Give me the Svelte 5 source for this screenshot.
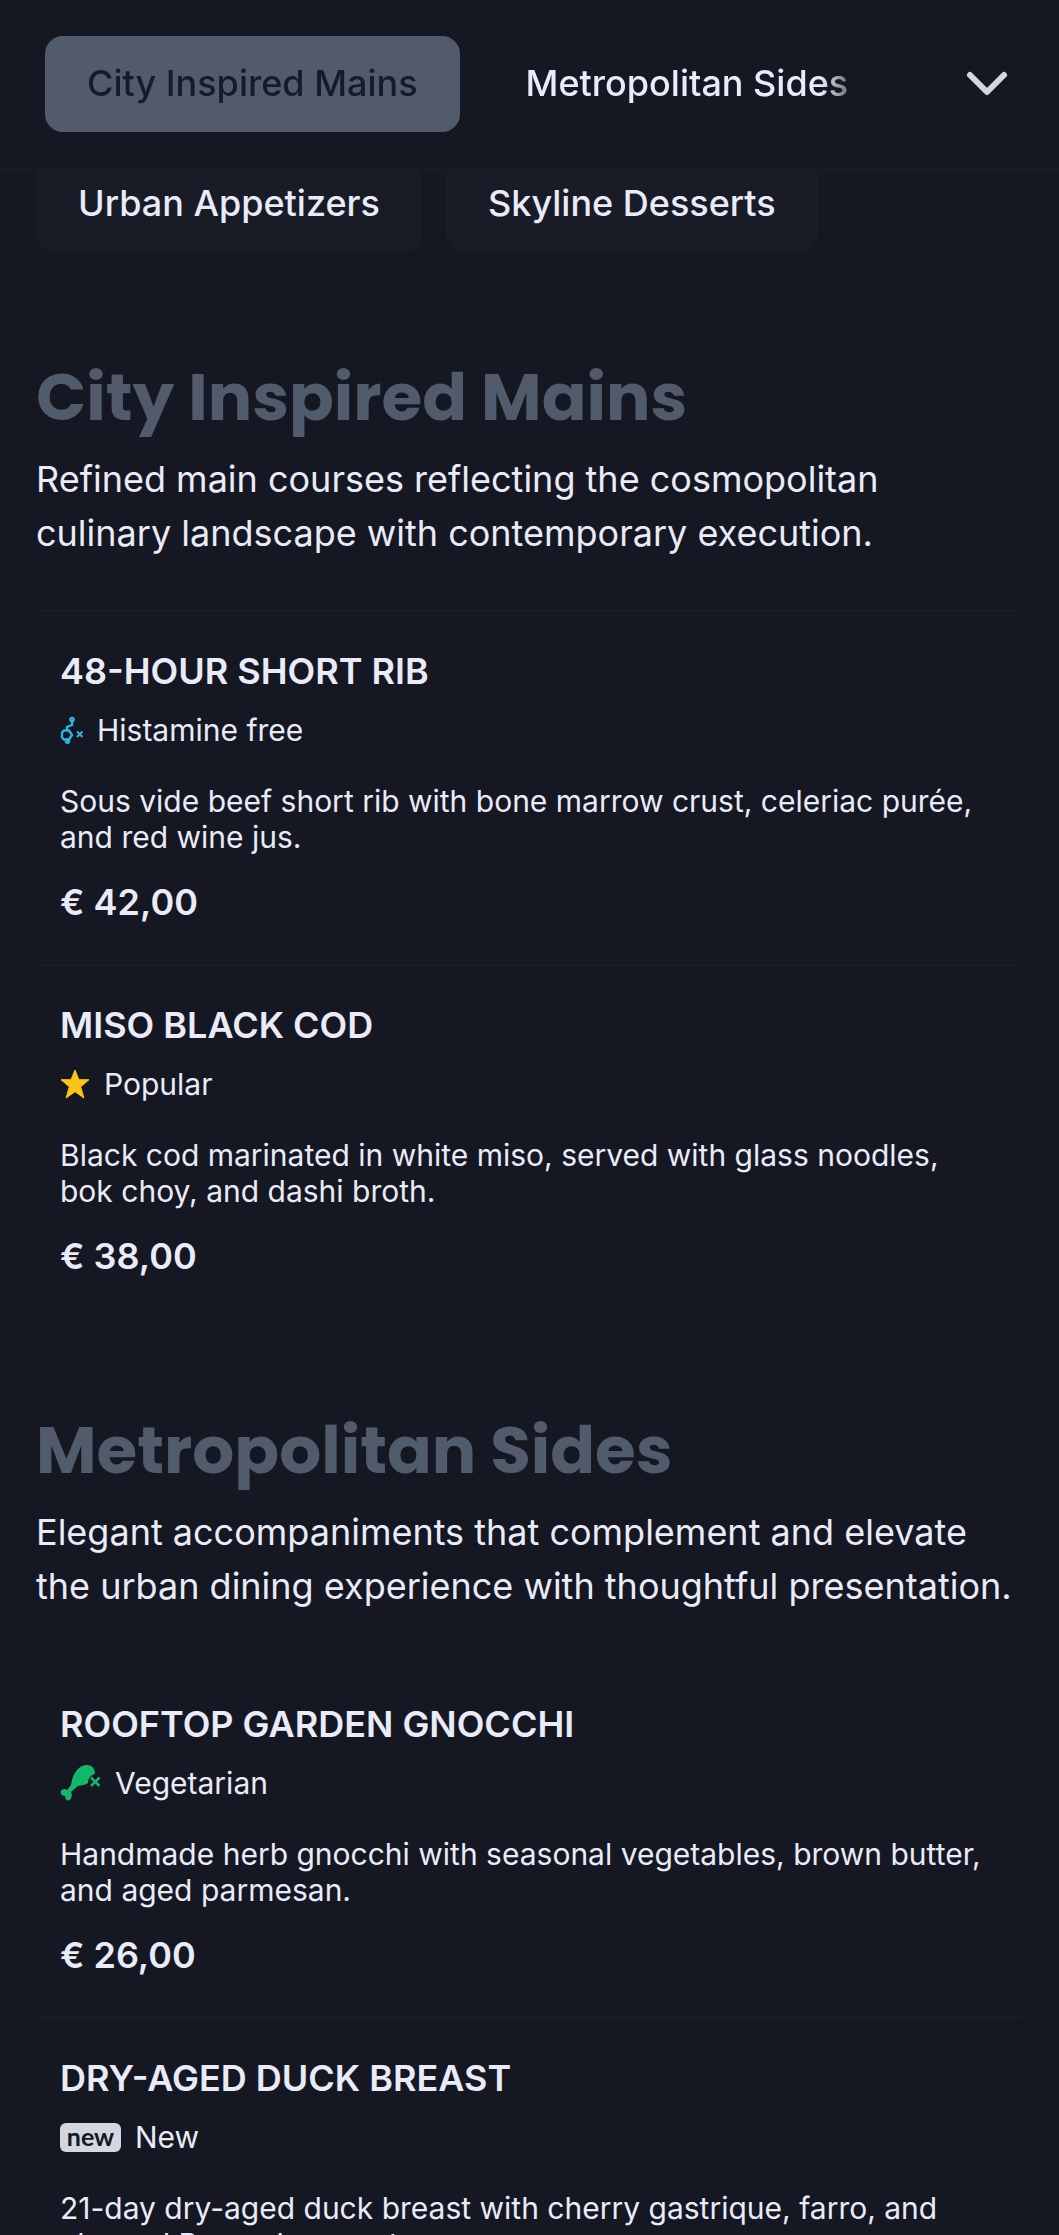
<script lang="ts">
  type Badge = 'histamine' | 'popular' | 'vegetarian' | 'new';

  interface Dish {
    name: string;
    badge: Badge;
    label: string;
    desc: string;
    price: string;
  }

  interface Section {
    id: string;
    title: string;
    intro: string;
    dishes: Dish[];
  }

  const sections: Section[] = [
    {
      id: 'mains',
      title: 'City Inspired Mains',
      intro: 'Refined main courses reflecting the cosmopolitan culinary landscape with contemporary execution.',
      dishes: [
        {
          name: '48-Hour Short Rib',
          badge: 'histamine',
          label: 'Histamine free',
          desc: 'Sous vide beef short rib with bone marrow crust, celeriac purée, and red wine jus.',
          price: '€ 42,00',
        },
        {
          name: 'Miso Black Cod',
          badge: 'popular',
          label: 'Popular',
          desc: 'Black cod marinated in white miso, served with glass noodles, bok choy, and dashi broth.',
          price: '€ 38,00',
        },
      ],
    },
    {
      id: 'sides',
      title: 'Metropolitan Sides',
      intro: 'Elegant accompaniments that complement and elevate the urban dining experience with thoughtful presentation.',
      dishes: [
        {
          name: 'Rooftop Garden Gnocchi',
          badge: 'vegetarian',
          label: 'Vegetarian',
          desc: 'Handmade herb gnocchi with seasonal vegetables, brown butter, and aged parmesan.',
          price: '€ 26,00',
        },
        {
          name: 'Dry-Aged Duck Breast',
          badge: 'new',
          label: 'New',
          desc: '21-day dry-aged duck breast with cherry gastrique, farro, and charred Brussels sprouts.',
          price: '€ 36,00',
        },
      ],
    },
  ];

  let active = $state('mains');
</script>

<div class="page">
  <header class="topbar">
    <nav class="tabs">
      {#each sections as s}
        <a class="pill" class:active={active === s.id} href="#{s.id}" onclick={() => (active = s.id)}>{s.title}</a>
      {/each}
    </nav>
    <button class="expand" aria-label="Show all categories">
      <svg width="44" height="28" viewBox="0 0 44 28" fill="none" stroke="currentColor" stroke-width="6" stroke-linecap="round" stroke-linejoin="round">
        <path d="M5 5l17 17L39 5" />
      </svg>
    </button>
  </header>

  <main>
    <nav class="chips">
      <a class="pill" href="#appetizers">Urban Appetizers</a>
      <a class="pill" href="#desserts">Skyline Desserts</a>
    </nav>

    {#each sections as s}
      <section id={s.id}>
        <h2>{s.title}</h2>
        <p class="intro">{s.intro}</p>
        {#each s.dishes as d}
          <article class="dish">
            <h3>{d.name}</h3>
            <div class="badge">
              {#if d.badge === 'histamine'}
                <svg width="23" height="28" viewBox="0 0 23 28" fill="none" stroke="#2fb4dc" stroke-width="2.400">
                  <path d="M4 14.500h5l3 4.500-3 4.500H4l-2-2v-5z" />
                  <path d="M7 14.500V11l5-2V5" />
                  <circle cx="12" cy="3.500" r="1.600" />
                  <circle cx="7.500" cy="25.200" r="1.500" />
                  <path d="M17 15.500l5.500 5.500M22.500 15.500L17 21" stroke-width="2" />
                </svg>
              {:else if d.badge === 'popular'}
                <svg width="30" height="30" viewBox="0 0 30 30" fill="#fcc419" stroke="#fcc419" stroke-linejoin="round">
                  <path d="M15 1l3.900 9.700H29l-8.300 7.100L23.900 29 15 22.700 6.100 29l3.200-11.200L1 10.700h10.100z" />
                </svg>
              {:else if d.badge === 'vegetarian'}
                <svg width="41" height="36" viewBox="0 0 41 36" fill="#12b76a">
                  <path d="M24 .5C30-1 35 2 35 9c-4 .5-7 4.500-7 9-2.500 2-6 2-10 3l-7 6c2 4 0 8.500-3 8.500-2 0-3-2-3-4.500-3 0-5-2-4-5 1-2 4-3 6-1l4-5C12 12 16 2.500 24 .5z" />
                  <path d="M31 12.500l8.500 8.500M39.500 12.500L31 21" stroke="#12b76a" stroke-width="2.500" fill="none" />
                </svg>
              {:else}
                <span class="new">new</span>
              {/if}
              <span>{d.label}</span>
            </div>
            <p class="desc">{d.desc}</p>
            <div class="price">{d.price}</div>
          </article>
        {/each}
      </section>
    {/each}
  </main>
</div>

<style>
  :global(body) {
    background: #151722;
  }

  .page {
    height: 100vh;
    overflow-y: auto;
    scrollbar-width: none;
    background: #151722;
    color: #e9ebf8;
    font-family: Inter, 'Liberation Sans', sans-serif;
    font-size: 36px;
    line-height: 54px;
  }

  .topbar {
    position: sticky;
    top: 0;
    z-index: 10;
    display: flex;
    align-items: center;
    justify-content: space-between;
    box-sizing: border-box;
    height: 171px;
    padding: 0 50px 2px 45px;
    border-bottom: 2px solid #191b26;
    background: #151722;
  }

  .tabs,
  .chips {
    display: flex;
    gap: 24px;
  }

  .tabs {
    flex: 1;
    margin-right: 96px;
    overflow: hidden;
    mask-image: linear-gradient(to right, #000 calc(100% - 48px), transparent);
  }

  .pill {
    padding: 20px 42px 22px;
    border-radius: 18px;
    color: inherit;
    font-weight: 500;
    text-decoration: none;
    white-space: nowrap;
  }

  .active {
    background: #525b6c;
    color: #151b2b;
  }

  .expand {
    display: flex;
    padding: 0;
    border: 0;
    background: none;
    color: #d4d6e1;
    cursor: pointer;
  }

  main {
    padding: 0 36px 96px;
  }

  .chips {
    margin: -15px 0 13px;
  }

  .chips .pill {
    background: #191b26;
  }

  section {
    padding-top: 83px;
  }

  h2,
  h3,
  p {
    margin: 0;
  }

  h2 {
    color: #525b6c;
    font-family: Poppins, Inter, sans-serif;
    font-size: 66px;
    font-weight: 700;
    line-height: 99px;
  }

  .intro {
    margin: 5px 0 50px;
  }

  .intro,
  .desc {
    padding-right: 6px;
  }

  .dish {
    padding: 32px 24px 35px;
    border-top: 2px solid #191b26;
  }

  h3 {
    font-size: 36px;
    font-weight: 600;
    text-transform: uppercase;
  }

  .badge {
    display: flex;
    align-items: center;
    gap: 14px;
    height: 36px;
    margin: 14px 0 35px;
    font-size: 30px;
    line-height: 36px;
  }

  .new {
    width: 61px;
    padding-bottom: 3px;
    border-radius: 6px;
    background: #d4d6e1;
    color: #151722;
    font-family: Lato, Inter, sans-serif;
    font-size: 25px;
    font-weight: 700;
    line-height: 26px;
    text-align: center;
  }

  .desc {
    font-size: 30px;
    line-height: 36px;
  }

  .price {
    margin-top: 20px;
    font-weight: 600;
  }
</style>
